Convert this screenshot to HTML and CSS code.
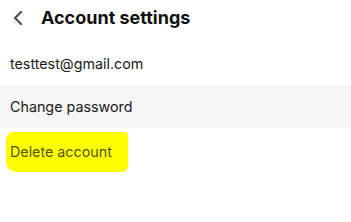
FILE: index.html
```html
<!DOCTYPE html>
<html lang="en">
<head>
    <meta charset="UTF-8">
    <meta name="viewport" content="width=device-width, initial-scale=1.0">
    <title>Account settings</title>
    <link rel="stylesheet" href="styles.css">
</head>
<body>

    <div class="header">
        <button class="back" aria-label="Back">
            <svg width="12" height="16" viewBox="0 0 12 16"><path d="M9 2 L3 8 L9 14" fill="none" stroke="#555" stroke-width="2.4" stroke-linecap="round" stroke-linejoin="round"/></svg>
        </button>
        <h1>Account settings</h1>
    </div>

    <div class="list">
        <div class="row">testtest@gmail.com</div>
        <div class="row alt">Change password</div>
        <div class="row marked">
            <span class="marker">Delete account</span>
        </div>
    </div>

</body>
</html>
```

FILE: styles.css
```css
body {
    margin: 0;
    background: #fff;
    font-family: 'Inter', 'Noto Sans', sans-serif;
    color: #1a1a1a;
}
.header {
    display: flex;
    align-items: center;
    height: 35px;
    padding: 0 0 0 12px;
}
.back {
    display: flex;
    align-items: center;
    background: none;
    border: none;
    padding: 0;
    margin-right: 17px;
    cursor: pointer;
}
h1 {
    margin: 0;
    font-size: 18px;
    font-weight: 700;
    color: #111;
}
.list {
    margin-top: 6px;
}
.row {
    display: flex;
    align-items: center;
    height: 44px;
    padding: 0 10px;
    font-size: 14.3px;
}
.alt {
    background: #f6f6f6;
    height: 43px;
}
.marked {
    align-items: flex-start;
    padding-top: 4px;
}
/* stabilo di atas tulisan */
.marker {
    margin-left: -4px;
    padding: 11px 16px 12px 4px;
    background: #ffff00;
    color: #55550c;
    border-radius: 8px 4px 6px 10px;
}
```
